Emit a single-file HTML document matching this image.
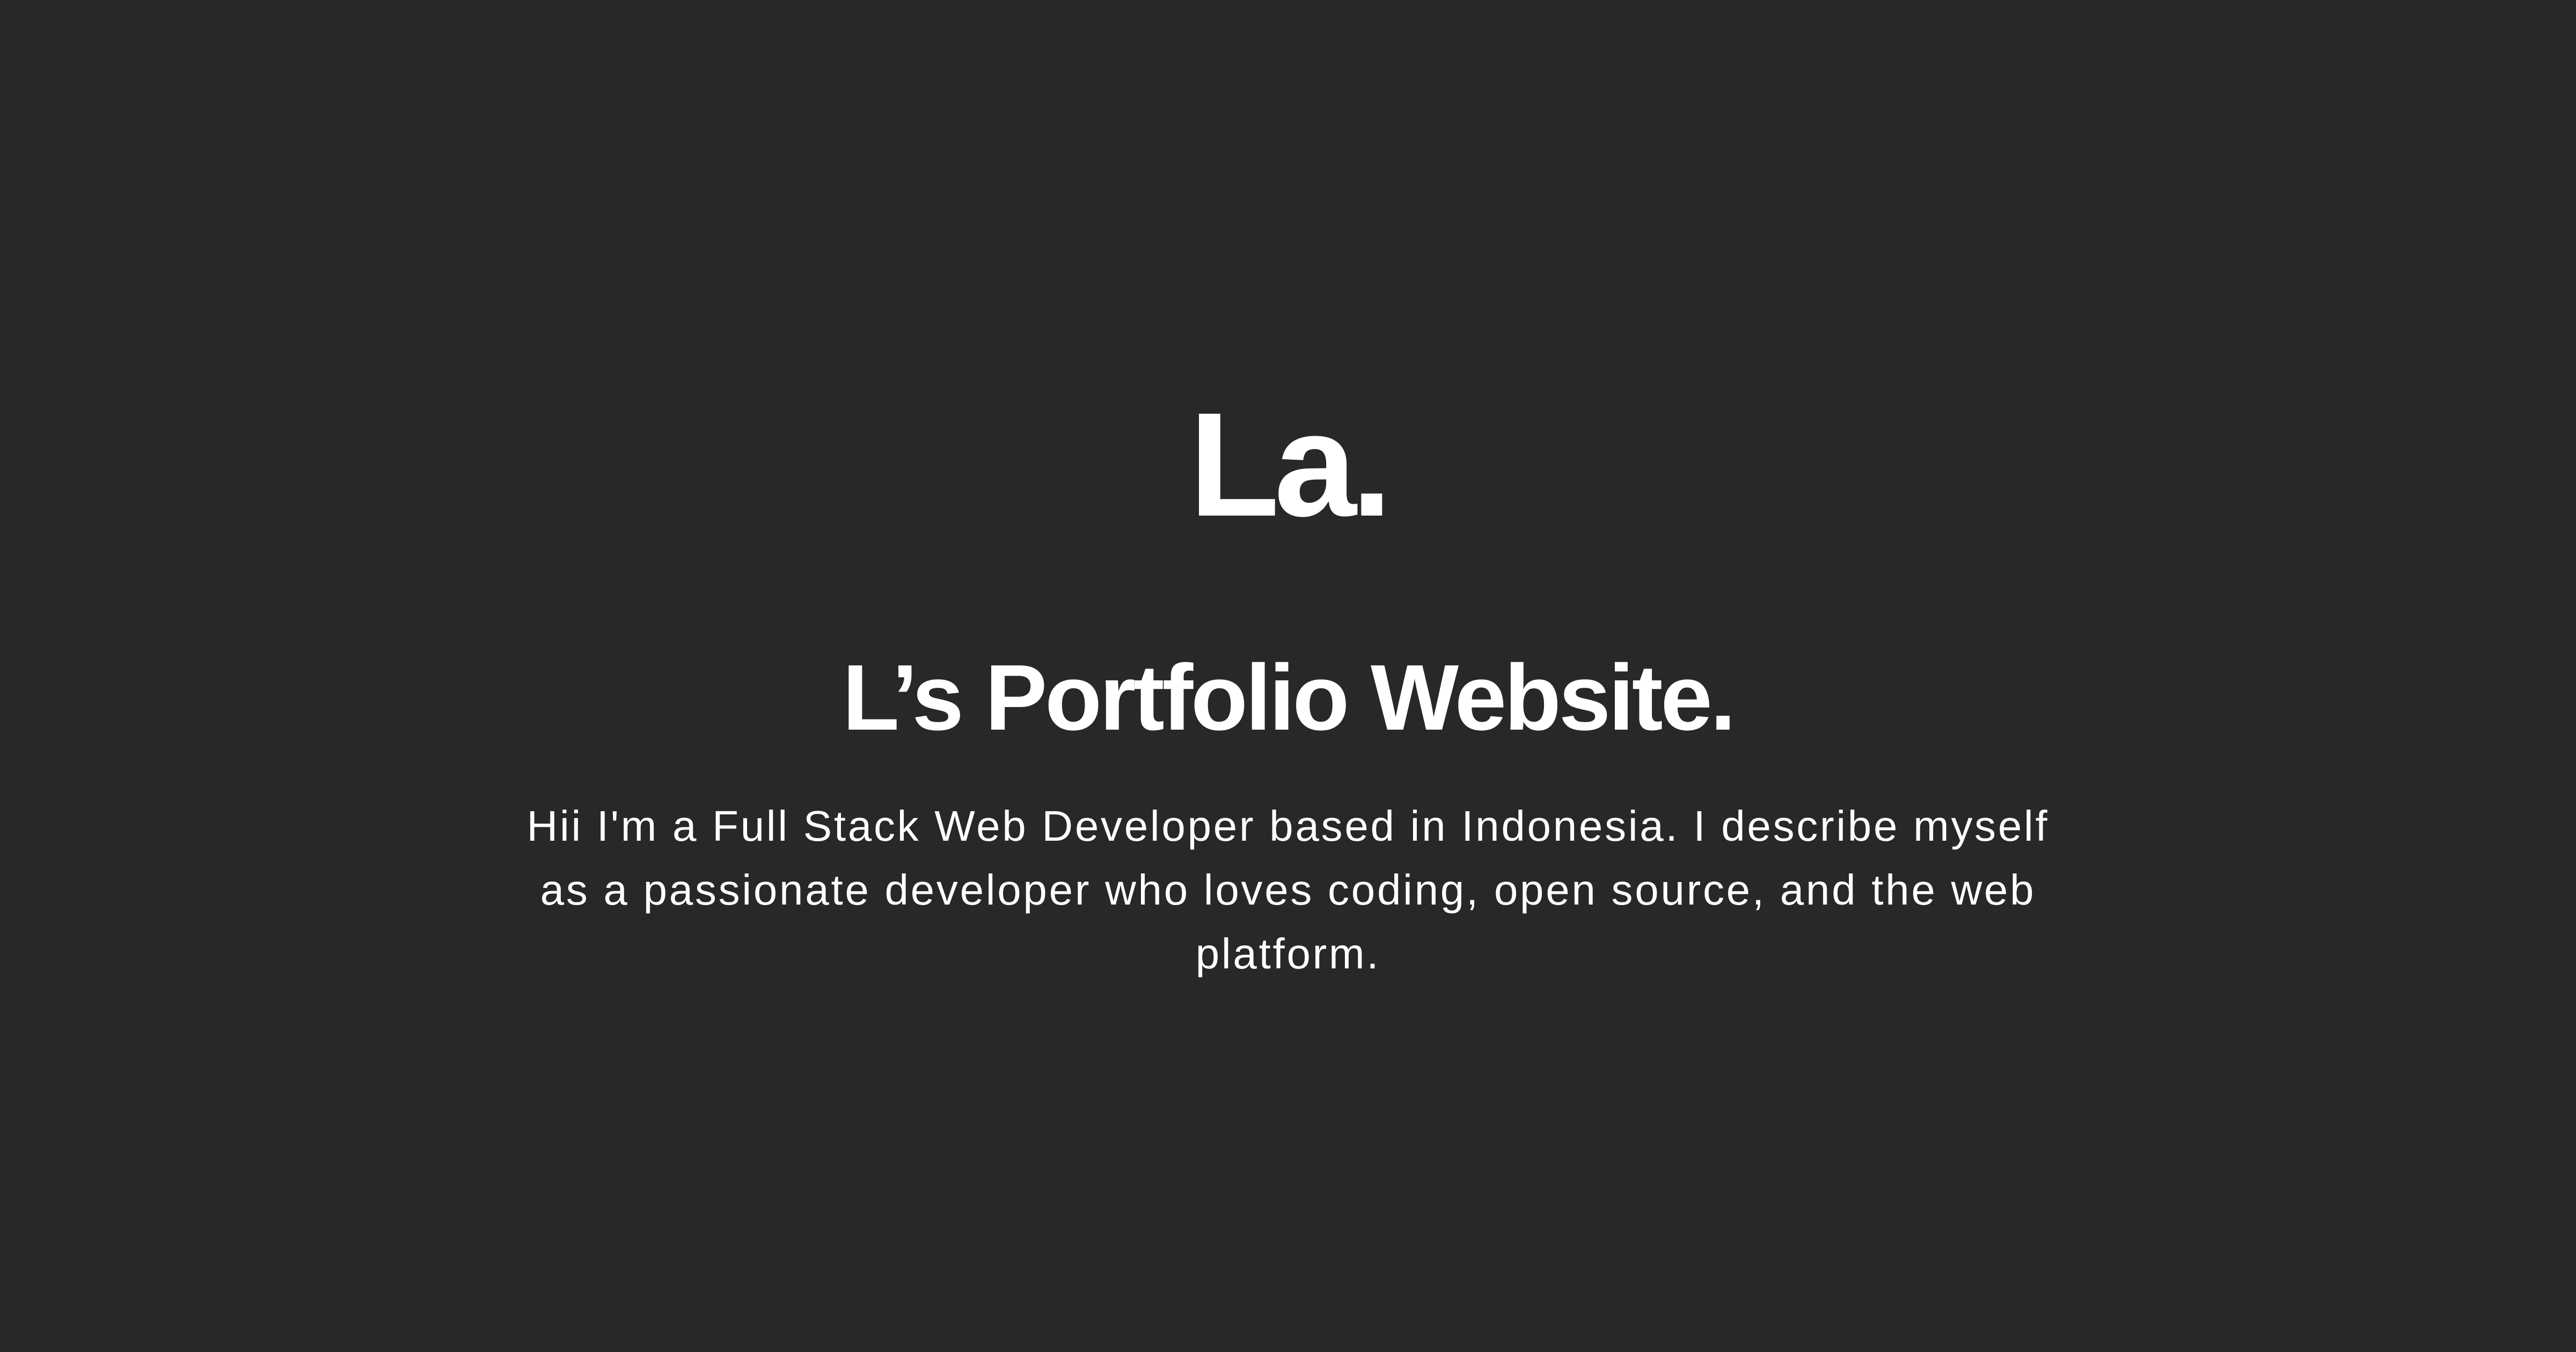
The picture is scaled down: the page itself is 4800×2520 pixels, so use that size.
<!DOCTYPE html>
<html>
<head>
<meta charset="utf-8">
<style>
html,body{margin:0;padding:0;}
body{width:4800px;height:2520px;background:#282828;position:relative;overflow:hidden;font-family:"Liberation Sans",sans-serif;color:#fff;}
.c{position:absolute;left:0;width:4800px;text-align:center;}
.logo{top:728px;font-size:276px;line-height:276px;font-weight:bold;letter-spacing:-10px;}
.h{top:1213px;font-size:174px;line-height:174px;font-weight:bold;letter-spacing:-4.5px;}
.p{top:1480px;font-size:80px;line-height:119px;letter-spacing:3.7px;}
</style>
</head>
<body>
<div class="c logo">La.</div>
<div class="c h">L’s Portfolio Website.</div>
<div class="c p">Hii I'm a Full Stack Web Developer based in Indonesia. I describe myself<br>as a passionate developer who loves coding, open source, and the web<br>platform.</div>
</body>
</html>
